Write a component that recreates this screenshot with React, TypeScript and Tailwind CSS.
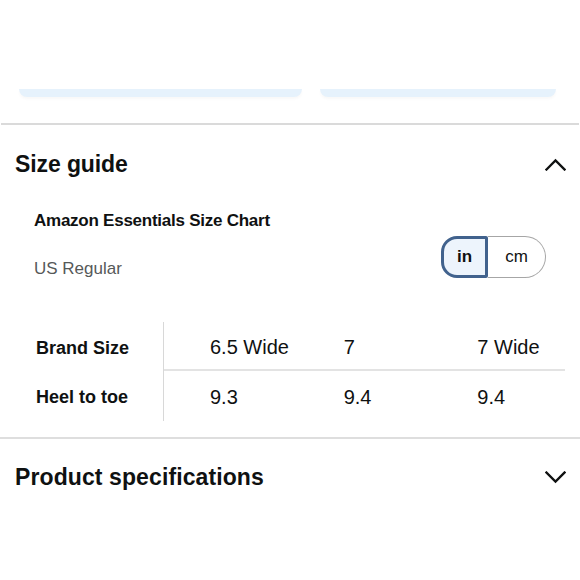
import React from "react";

const Chevron = ({ up }: { up?: boolean }) => (
  <svg width="21" height="13" viewBox="0 0 21 13" fill="none">
    <polyline
      points={up ? "1.5,11.5 10.5,2.5 19.5,11.5" : "1.5,1.5 10.5,10.5 19.5,1.5"}
      stroke="#0f1111"
      strokeWidth="2.3"
      strokeLinecap="square"
      strokeLinejoin="miter"
    />
  </svg>
);

export default function App() {
  const cols = [
    ["6.5 Wide", "9.3"],
    ["7", "9.4"],
    ["7 Wide", "9.4"],
  ];
  return (
    <div className="w-[580px] h-[580px] bg-white text-[#0f1111] font-['Liberation_Sans',Arial,sans-serif] overflow-hidden">
      {/* top cut-off buttons */}
      <div className="h-[123px] flex items-start pt-[89px] pl-[19px] gap-[18px]">
        <div className="w-[283px] h-[8px] rounded-b-[12px] bg-[#e6f2fc] shadow-[0_2px_3px_rgba(0,0,0,0.03)]" />
        <div className="w-[236px] h-[8px] rounded-b-[12px] bg-[#e6f2fc] shadow-[0_2px_3px_rgba(0,0,0,0.03)]" />
      </div>
      <div className="h-[2px] mx-[1px] bg-[#dadada]" />

      {/* Size guide header */}
      <div className="h-[78px] flex items-center justify-between pl-[15px] pr-[14px] pt-[1px]">
        <span className="text-[23px] font-bold tracking-[-0.1px]">Size guide</span>
        <Chevron up />
      </div>

      <div className="flex justify-between pl-[34px] pr-[34px]">
        <div className="flex flex-col">
          <span className="text-[17px] font-bold tracking-[-0.25px] leading-[20px] mt-[8px]">
            Amazon Essentials Size Chart
          </span>
          <span className="text-[17px] text-[#565959] leading-[20px] mt-[28px]">US Regular</span>
        </div>
        <div className="flex h-[42px] mt-[33px]">
          <div className="w-[47px] flex items-center justify-center border-[3px] border-[#41628d] bg-[#edf4fc] rounded-l-[16px] rounded-r-[2px] text-[17px] font-bold">
            in
          </div>
          <div className="w-[58px] flex items-center justify-center border border-l-0 border-[#a6a6a6] rounded-r-[21px] text-[17px]">
            cm
          </div>
        </div>
      </div>

      {/* Table */}
      <div className="mt-[43px] flex">
        <div className="w-[164px] border-r border-[#d8d8d8] pl-[36px] font-bold text-[18px]">
          <div className="h-[49px] flex items-center pt-[3px]">Brand Size</div>
          <div className="h-[50px] flex items-center pt-[3px]">Heel to toe</div>
        </div>
        <div className="w-[401px] text-[20px]">
          <div className="h-[49px] flex items-center pt-[3px] border-b-2 border-[#e3e3e3]">
            {cols.map((c, i) => (
              <div key={i} className="w-[134px] pl-[46px]">{c[0]}</div>
            ))}
          </div>
          <div className="h-[50px] flex items-center pt-[2px]">
            {cols.map((c, i) => (
              <div key={i} className="w-[134px] pl-[46px]">{c[1]}</div>
            ))}
          </div>
        </div>
      </div>

      <div className="mt-[16px] h-[2px] bg-[#dedede]" />

      <div className="h-[76px] flex items-center justify-between pl-[15px] pr-[14px]">
        <span className="text-[23px] font-bold tracking-[0.1px]">Product specifications</span>
        <Chevron />
      </div>
    </div>
  );
}
